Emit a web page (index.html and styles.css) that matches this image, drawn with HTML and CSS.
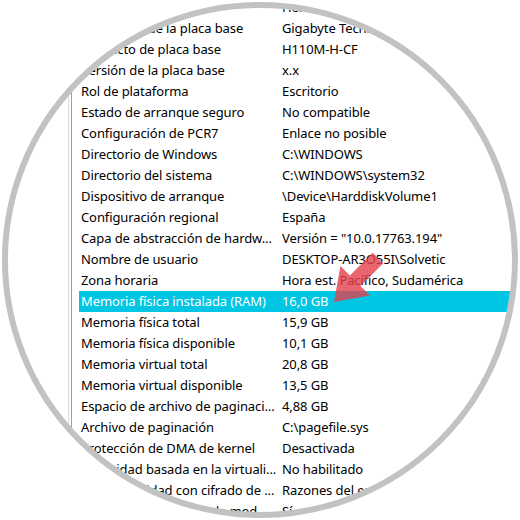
FILE: index.html
```html
<!DOCTYPE html>
<html lang="es">
<head>
<meta charset="utf-8">
<title>Información del sistema</title>
<link rel="stylesheet" href="styles.css">
</head>
<body>
<div class="frame">
  <div class="pane">
    <div class="tree"></div>
    <div class="list">
      <div class="row"><span>Modo de BIOS</span><span>Heredado</span></div>
      <div class="row"><span>Fabricante de la placa base</span><span>Gigabyte Technology Co., Ltd.</span></div>
      <div class="row"><span>Producto de placa base</span><span>H110M-H-CF</span></div>
      <div class="row"><span>Versión de la placa base</span><span>x.x</span></div>
      <div class="row"><span>Rol de plataforma</span><span>Escritorio</span></div>
      <div class="row"><span>Estado de arranque seguro</span><span>No compatible</span></div>
      <div class="row"><span>Configuración de PCR7</span><span>Enlace no posible</span></div>
      <div class="row"><span>Directorio de Windows</span><span>C:\WINDOWS</span></div>
      <div class="row"><span>Directorio del sistema</span><span>C:\WINDOWS\system32</span></div>
      <div class="row"><span>Dispositivo de arranque</span><span>\Device\HarddiskVolume1</span></div>
      <div class="row"><span>Configuración regional</span><span>España</span></div>
      <div class="row"><span>Capa de abstracción de hardw...</span><span>Versión = "10.0.17763.194"</span></div>
      <div class="row"><span>Nombre de usuario</span><span>DESKTOP-AR3O55I\Solvetic</span></div>
      <div class="row"><span>Zona horaria</span><span>Hora est. Pacífico, Sudamérica</span></div>
      <div class="row selected"><span>Memoria física instalada (RAM)</span><span>16,0 GB</span></div>
      <div class="row"><span>Memoria física total</span><span>15,9 GB</span></div>
      <div class="row"><span>Memoria física disponible</span><span>10,1 GB</span></div>
      <div class="row"><span>Memoria virtual total</span><span>20,8 GB</span></div>
      <div class="row"><span>Memoria virtual disponible</span><span>13,5 GB</span></div>
      <div class="row"><span>Espacio de archivo de paginaci...</span><span>4,88 GB</span></div>
      <div class="row"><span>Archivo de paginación</span><span>C:\pagefile.sys</span></div>
      <div class="row"><span>Protección de DMA de kernel</span><span>Desactivada</span></div>
      <div class="row"><span>Seguridad basada en la virtuali...</span><span>No habilitado</span></div>
      <div class="row"><span>Compatibilidad con cifrado de ...</span><span>Razones del error en el cifrado</span></div>
      <div class="row"><span>Hyper-V: extensiones de mod...</span><span>Sí</span></div>
    </div>
  </div>
  <svg class="arrow" width="520" height="520" viewBox="0 0 520 520">
    <polygon points="334,302 370,295.6 360.5,286.1 383.3,263.3 372.7,252.7 349.9,275.5 340.4,266"/>
  </svg>
</div>
</body>
</html>
```
FILE: styles.css
```css
html, body {
  margin: 0;
  padding: 0;
  background: #ffffff;
}

.frame {
  position: relative;
  box-sizing: border-box;
  width: 516px;
  height: 516px;
  margin: 2px;
  border: 6px solid #c2c2c2;
  border-radius: 50%;
  overflow: hidden;
  background: #ffffff;
}

.pane {
  display: flex;
  margin-top: -11px;
}

.tree {
  width: 60px;
  flex: none;
  border-right: 1px solid #dadada;
}

.list {
  flex: 1;
  margin-left: 2px;
  border-left: 1px solid #a0a0a0;
  padding-left: 7px;
  font-family: "Noto Sans", "Liberation Sans", sans-serif;
  font-size: 13px;
  letter-spacing: -0.1px;
  color: #000000;
}

.row {
  display: grid;
  grid-template-columns: 203px 1fr;
  height: 21px;
  line-height: 21px;
  white-space: nowrap;
  overflow: hidden;
}

.row span:first-child {
  padding-left: 2px;
  overflow: hidden;
}

.row.selected {
  background: #00c6e4;
  color: #ffffff;
}

.arrow {
  position: absolute;
  left: -8px;
  top: -8px;
  pointer-events: none;
}

.arrow polygon {
  fill: #e4404e;
  opacity: 0.8;
}
```
